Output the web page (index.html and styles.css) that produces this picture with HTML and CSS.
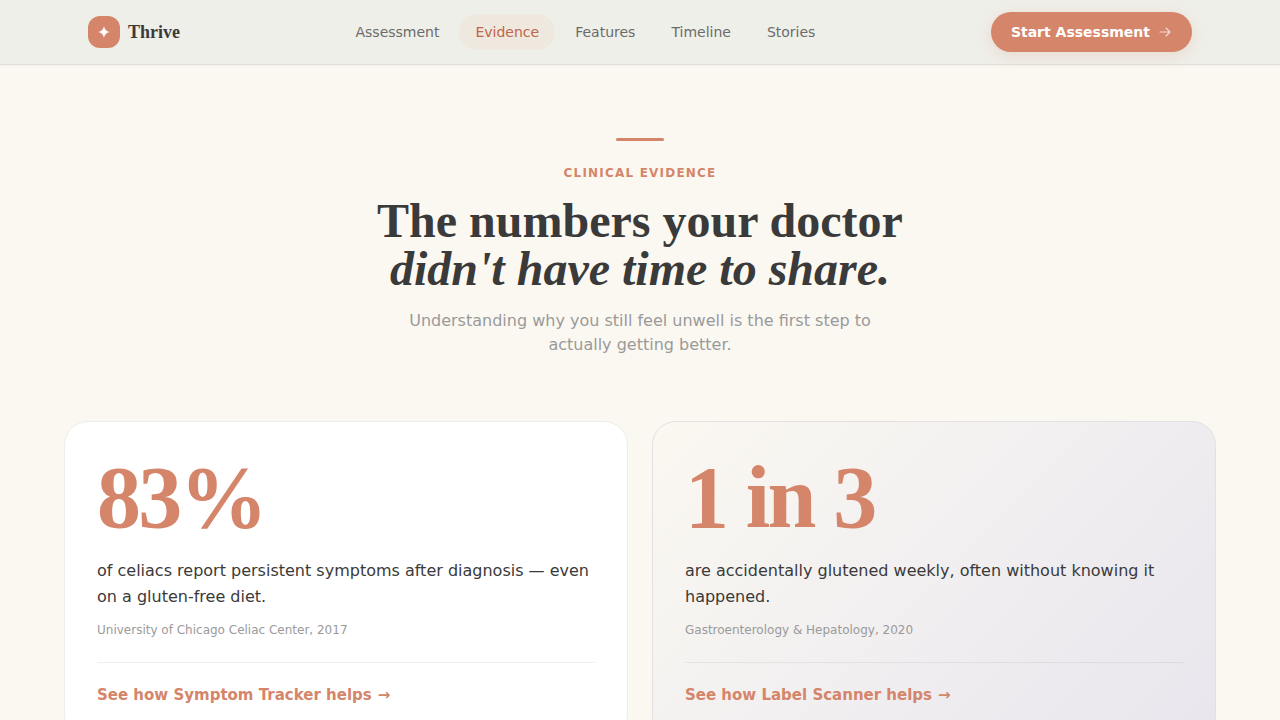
FILE: index.html
```html
<!DOCTYPE html>
<html lang="en">
<head>
<meta charset="utf-8">
<meta name="viewport" content="width=device-width, initial-scale=1">
<title>Thrive</title>
<link rel="stylesheet" href="styles.css">
</head>
<body>
<header class="site-header">
  <div class="header-inner">
    <a class="brand" href="#">
      <span class="brand-mark">
        <svg width="12" height="12" viewBox="0 0 12 12" aria-hidden="true"><path d="M6 0C6.800 3.700 8.300 5.200 12 6C8.300 6.800 6.800 8.300 6 12C5.200 8.300 3.700 6.800 0 6C3.700 5.200 5.200 3.700 6 0Z" fill="#fff"/></svg>
      </span>
      <span class="brand-name">Thrive</span>
    </a>
    <nav class="nav" aria-label="Main">
      <a class="nav-link" href="#assessment">Assessment</a>
      <a class="nav-link active" href="#evidence">Evidence</a>
      <a class="nav-link" href="#features">Features</a>
      <a class="nav-link" href="#timeline">Timeline</a>
      <a class="nav-link" href="#stories">Stories</a>
    </nav>
    <button class="cta" type="button">Start Assessment
      <svg class="cta-icon" width="14" height="14" viewBox="0 0 14 14" fill="none" stroke="currentColor" stroke-width="1.200" stroke-linecap="round" stroke-linejoin="round" aria-hidden="true"><path d="M2 7h10M8 3l4 4-4 4"/></svg>
    </button>
  </div>
</header>
<main class="evidence" id="evidence">
  <div class="intro">
    <div class="bar"></div>
    <p class="eyebrow">Clinical Evidence</p>
    <h1 class="title">The numbers your doctor<br><em>didn't have time to share.</em></h1>
    <p class="lead">Understanding why you still feel unwell is the first step to actually getting better.</p>
  </div>
  <div class="cards">
    <article class="card">
      <div class="stat">83%</div>
      <p class="claim">of celiacs report persistent symptoms after diagnosis — even on a gluten-free diet.</p>
      <p class="source">University of Chicago Celiac Center, 2017</p>
      <div class="card-foot"><a class="more" href="#features">See how Symptom Tracker helps <span>→</span></a></div>
    </article>
    <article class="card tinted">
      <div class="stat">1 in 3</div>
      <p class="claim">are accidentally glutened weekly, often without knowing it happened.</p>
      <p class="source">Gastroenterology &amp; Hepatology, 2020</p>
      <div class="card-foot"><a class="more" href="#features">See how Label Scanner helps <span>→</span></a></div>
    </article>
  </div>
</main>
</body>
</html>
```
FILE: styles.css
```css
:root {
  --accent: #d4856a;
  --ink: #3a3a3a;
  --muted: #9a9a9a;
  --page: #fbf8f1;
  --sans: "DejaVu Sans", sans-serif;
  --serif: "Liberation Serif", serif;
}

* { box-sizing: border-box; }
html { scrollbar-width: none; }
body { margin: 0; background: var(--page); color: var(--ink); font-family: var(--sans); }
p, h1 { margin: 0; }
a { text-decoration: none; }

.site-header {
  position: sticky;
  top: 0;
  background: #efefe9;
  border-bottom: 1px solid #dfdfd9;
  box-shadow: 0 1px 2px rgba(0, 0, 0, 0.04);
}
.header-inner {
  display: flex;
  align-items: center;
  justify-content: space-between;
  max-width: 1152px;
  min-height: 64px;
  margin: 0 auto;
  padding: 0 24px;
}
.brand { display: flex; align-items: center; gap: 8px; color: var(--ink); }
.brand-mark {
  display: grid;
  place-items: center;
  width: 32px;
  height: 32px;
  border-radius: 12px;
  background: var(--accent);
}
.brand-name { font: 700 18px/28px var(--serif); }
.nav { display: flex; gap: 4px; }
.nav-link { padding: 8px 16px; border-radius: 18px; color: #6b6b6b; font-size: 14px; line-height: 20px; }
.nav-link.active { background: #efe8de; color: #c0654a; }
.cta {
  display: flex;
  align-items: center;
  gap: 8px;
  padding: 10px 20px;
  border: 0;
  border-radius: 20px;
  background: var(--accent);
  box-shadow: 0 4px 16px rgba(212, 133, 106, 0.2);
  color: #fff;
  font: 700 14px/20px var(--sans);
}
.cta-icon { opacity: 0.7; }

.evidence { max-width: 1216px; margin: 0 auto; padding: 73px 32px 96px; }
.intro { display: flex; flex-direction: column; align-items: center; margin-bottom: 64px; text-align: center; }
.bar { width: 48px; height: 3px; margin-bottom: 24px; border-radius: 2px; background: var(--accent); }
.eyebrow {
  margin-bottom: 16px;
  color: var(--accent);
  font-size: 12px;
  font-weight: 700;
  line-height: 16px;
  letter-spacing: 0.1em;
  text-transform: uppercase;
}
.title { margin-bottom: 16px; font: 700 48px/48px var(--serif); }
.lead { max-width: 512px; color: var(--muted); font-size: 16px; line-height: 24px; }

.cards { display: grid; grid-template-columns: 1fr 1fr; gap: 24px; }
.card { padding: 32px; border: 1px solid #ededeb; border-radius: 24px; background: #fff; }
.card.tinted { border-color: #e2e0e2; background: linear-gradient(135deg, #fbf8f1, #f1eff0 50%, #e8e5ed); }
.stat { margin-bottom: 16px; color: var(--accent); font: 700 88px/88px var(--serif); letter-spacing: -0.03em; }
.claim { margin-bottom: 12px; font-size: 16px; line-height: 26px; }
.source { margin-bottom: 24px; color: var(--muted); font-size: 12px; line-height: 16px; }
.card-foot { padding-top: 20px; border-top: 1px solid rgba(58, 58, 58, 0.08); line-height: 24px; }
.more { display: inline-flex; gap: 6px; color: var(--accent); font-size: 15px; font-weight: 700; }
```
